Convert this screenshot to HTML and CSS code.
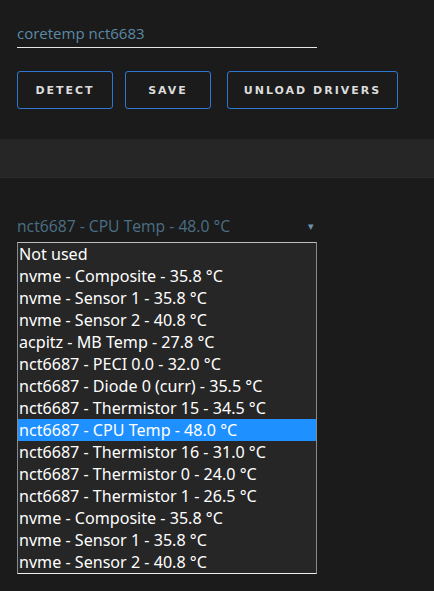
FILE: index.html
```html
<!DOCTYPE html>
<html lang="en">
<head>
  <meta charset="UTF-8">
  <title>Sensors</title>
  <link rel="stylesheet" href="styles.css">
</head>
<body>
  <div class="top">
    <div class="field">coretemp nct6683</div>
    <div class="actions">
      <button class="btn btn-detect">Detect</button>
      <button class="btn btn-save">Save</button>
      <button class="btn btn-unload">Unload drivers</button>
    </div>
  </div>

  <div class="band"></div>

  <div class="sensor">
    <div class="select">
      <span>nct6687 - CPU Temp - 48.0 °C</span>
      <span class="arrow">&#9662;</span>
    </div>
    <ul class="options">
      <li>Not used</li>
      <li>nvme - Composite - 35.8 °C</li>
      <li>nvme - Sensor 1 - 35.8 °C</li>
      <li>nvme - Sensor 2 - 40.8 °C</li>
      <li>acpitz - MB Temp - 27.8 °C</li>
      <li>nct6687 - PECI 0.0 - 32.0 °C</li>
      <li>nct6687 - Diode 0 (curr) - 35.5 °C</li>
      <li>nct6687 - Thermistor 15 - 34.5 °C</li>
      <li class="selected">nct6687 - CPU Temp - 48.0 °C</li>
      <li>nct6687 - Thermistor 16 - 31.0 °C</li>
      <li>nct6687 - Thermistor 0 - 24.0 °C</li>
      <li>nct6687 - Thermistor 1 - 26.5 °C</li>
      <li>nvme - Composite - 35.8 °C</li>
      <li>nvme - Sensor 1 - 35.8 °C</li>
      <li>nvme - Sensor 2 - 40.8 °C</li>
    </ul>
  </div>
</body>
</html>
```

FILE: styles.css
```css
body {
  margin: 0;
  background: #1b1b1b;
  font-family: "Open Sans", sans-serif;
  height: 591px;
  overflow: hidden;
}

.top {
  padding: 21px 17px 30px;
}

.field {
  width: 300px;
  color: #5b89a4;
  font-size: 15px;
  line-height: 24px;
  padding-bottom: 2px;
  border-bottom: 1px solid #e6e6e6;
}

.actions {
  display: flex;
  margin-top: 23px;
}

.btn {
  height: 38px;
  background: transparent;
  border: 1px solid #2f78d2;
  border-radius: 3px;
  color: #dcdcdc;
  font-family: "DejaVu Sans", sans-serif;
  font-weight: bold;
  font-size: 11px;
  letter-spacing: 2px;
  text-transform: uppercase;
  padding: 0;
}

.btn-detect {
  width: 96px;
  margin-right: 12px;
}

.btn-save {
  width: 86px;
  margin-right: 16px;
}

.btn-unload {
  width: 171px;
}

.band {
  height: 38px;
  background: #262626;
  border-bottom: 1px solid #2a2a2a;
}

.sensor {
  position: relative;
  width: 300px;
  margin: 35px 17px 0;
}

.select {
  display: flex;
  justify-content: space-between;
  align-items: center;
  color: #4a7086;
  font-size: 15.7px;
  line-height: 26px;
}

.arrow {
  color: #6a93ad;
  font-size: 11px;
  margin-right: 3px;
}

.options {
  position: absolute;
  top: 29px;
  left: 0;
  width: 298px;
  margin: 0;
  padding: 0;
  list-style: none;
  background: #262626;
  border: 1px solid #8a8a8a;
  border-top-color: #bdbdbd;
  border-bottom-color: #f0f0f0;
  font-family: "Noto Sans", sans-serif;
  font-size: 16.1px;
  color: #ffffff;
}

.options li {
  height: 22px;
  line-height: 22px;
  padding-left: 1px;
  white-space: nowrap;
}

.options .selected {
  background: #1e90ff;
}
```
